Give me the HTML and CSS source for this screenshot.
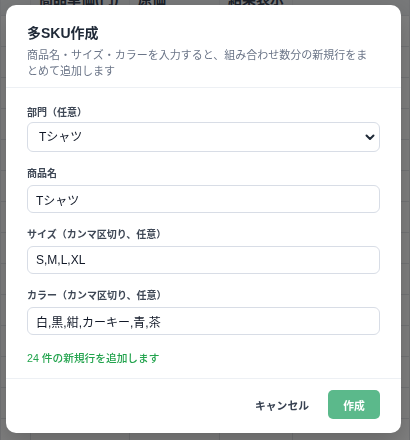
FILE: index.html
```html
<!DOCTYPE html>
<html lang="ja">
<head>
    <meta charset="UTF-8">
    <meta name="viewport" content="width=device-width, initial-scale=1.0">
    <title>多SKU作成</title>
    <link rel="stylesheet" href="styles.css">
</head>
<body>
    <!-- Sheet behind the dialog -->
    <div class="sheet">
        <table class="grid">
            <colgroup>
                <col class="col-no">
                <col class="col-price">
                <col class="col-cost">
                <col class="col-result">
                <col>
            </colgroup>
            <thead>
                <tr>
                    <th></th>
                    <th>商品単価(円)</th>
                    <th>原価</th>
                    <th>結果表示</th>
                    <th></th>
                </tr>
            </thead>
            <tbody>
                <tr><td></td><td></td><td></td><td></td><td></td></tr>
                <tr><td></td><td></td><td></td><td></td><td></td></tr>
                <tr><td></td><td></td><td></td><td></td><td></td></tr>
                <tr><td></td><td></td><td></td><td></td><td></td></tr>
                <tr><td></td><td></td><td></td><td></td><td></td></tr>
                <tr><td></td><td></td><td></td><td></td><td></td></tr>
                <tr><td></td><td></td><td></td><td></td><td></td></tr>
                <tr><td></td><td></td><td></td><td></td><td></td></tr>
                <tr><td></td><td></td><td></td><td></td><td></td></tr>
                <tr><td></td><td></td><td></td><td></td><td></td></tr>
                <tr><td></td><td></td><td></td><td></td><td></td></tr>
                <tr><td></td><td></td><td></td><td></td><td></td></tr>
                <tr><td></td><td></td><td></td><td></td><td></td></tr>
                <tr><td></td><td></td><td></td><td></td><td></td></tr>
            </tbody>
        </table>
    </div>

    <!-- Bulk SKU dialog -->
    <div class="overlay">
        <div class="modal">
            <div class="modal-header">
                <h2 class="modal-title">多SKU作成</h2>
                <p class="modal-desc">商品名・サイズ・カラーを入力すると、組み合わせ数分の新規行をまとめて追加します</p>
            </div>

            <form class="modal-body">
                <div class="field">
                    <label class="field-label field-label-select" for="dept">部門（任意）</label>
                    <div class="select-wrap">
                        <select id="dept" class="select">
                            <option>Tシャツ</option>
                        </select>
                        <svg class="select-arrow" width="10" height="7" viewBox="0 0 10 7">
                            <path d="M1.5 1.5 L5 5 L8.5 1.5" fill="none" stroke="#1f2937" stroke-width="2" stroke-linecap="round" stroke-linejoin="round"/>
                        </svg>
                    </div>
                </div>

                <div class="field">
                    <label class="field-label" for="name">商品名</label>
                    <input type="text" id="name" class="input" value="Tシャツ">
                </div>

                <div class="field">
                    <label class="field-label" for="sizes">サイズ（カンマ区切り、任意）</label>
                    <input type="text" id="sizes" class="input" value="S,M,L,XL">
                </div>

                <div class="field">
                    <label class="field-label" for="colors">カラー（カンマ区切り、任意）</label>
                    <input type="text" id="colors" class="input" value="白,黒,紺,カーキー,青,茶">
                </div>

                <p class="count-note">24 件の新規行を追加します</p>
            </form>

            <div class="modal-footer">
                <button type="button" class="btn-cancel">キャンセル</button>
                <button type="button" class="btn-create">作成</button>
            </div>
        </div>
    </div>
</body>
</html>
```

FILE: styles.css
```css
body {
    margin: 0;
    font-family: "Liberation Sans", "Noto Sans CJK JP", sans-serif;
    background: #ffffff;
    color: #1f2937;
    overflow: hidden;
}

/* background sheet */
.sheet {
    margin-top: -21px;
}
.grid {
    width: 100%;
    border-collapse: collapse;
    table-layout: fixed;
}
.col-no { width: 30px; }
.col-price { width: 99px; }
.col-cost { width: 90px; }
.col-result { width: 73px; }
.grid th,
.grid td {
    border: 1px solid #e5e7eb;
    height: 30px;
    padding: 0 8px;
    text-align: left;
}
.grid th {
    height: 35px;
    background: #eef0f3;
    font-size: 14px;
    font-weight: 600;
    color: #374151;
}

/* dialog */
.overlay {
    position: fixed;
    inset: 0;
    background: rgba(0, 0, 0, 0.5);
    display: flex;
    align-items: flex-start;
    padding: 5px 0 0 6px;
}
.modal {
    width: 395px;
    background: #ffffff;
    border-radius: 10px;
    box-shadow: 0 10px 25px rgba(0, 0, 0, 0.2);
}
.modal-header {
    padding: 18px 21px 8px;
    border-bottom: 1px solid #edf0f4;
}
.modal-title {
    margin: 0;
    font-size: 14px;
    line-height: 20px;
    font-weight: 700;
    color: #1f2937;
}
.modal-desc {
    margin: 4px 8px 0 0;
    font-size: 11px;
    line-height: 16px;
    color: #6b7588;
}
.modal-body {
    padding: 18px 21px 12px;
    margin: 0;
}
.field {
    display: flex;
    flex-direction: column;
    margin-bottom: 15px;
}
.field-label {
    font-size: 10px;
    line-height: 14px;
    font-weight: 600;
    color: #3f4856;
    margin-bottom: 4px;
}
.field-label-select {
    margin-bottom: 2px;
}
.input,
.select {
    box-sizing: border-box;
    width: 100%;
    height: 28px;
    margin: 0;
    padding: 0 8px;
    border: 1px solid #d8dde6;
    border-radius: 6px;
    background: #ffffff;
    font-family: inherit;
    font-size: 12px;
    color: #111827;
    outline: none;
}
.select-wrap {
    position: relative;
}
.select {
    height: 30px;
    padding-left: 11px;
    appearance: none;
    -webkit-appearance: none;
}
.select-arrow {
    position: absolute;
    right: 5px;
    top: 12px;
    pointer-events: none;
}
.count-note {
    margin: 0;
    font-size: 10.7px;
    line-height: 16px;
    font-weight: 500;
    color: #22a34d;
}
.modal-footer {
    display: flex;
    justify-content: flex-end;
    align-items: center;
    gap: 7px;
    padding: 11px 21px 14px;
    border-top: 1px solid #edf0f4;
}
.btn-cancel,
.btn-create {
    height: 29px;
    border: none;
    border-radius: 5px;
    font-family: inherit;
    font-size: 10.8px;
    font-weight: 600;
    cursor: pointer;
}
.btn-cancel {
    background: transparent;
    color: #374151;
    padding: 0 12px;
}
.btn-create {
    background: #5bb98b;
    color: #ffffff;
    padding: 0 15px;
    width: 52px;
}
```
